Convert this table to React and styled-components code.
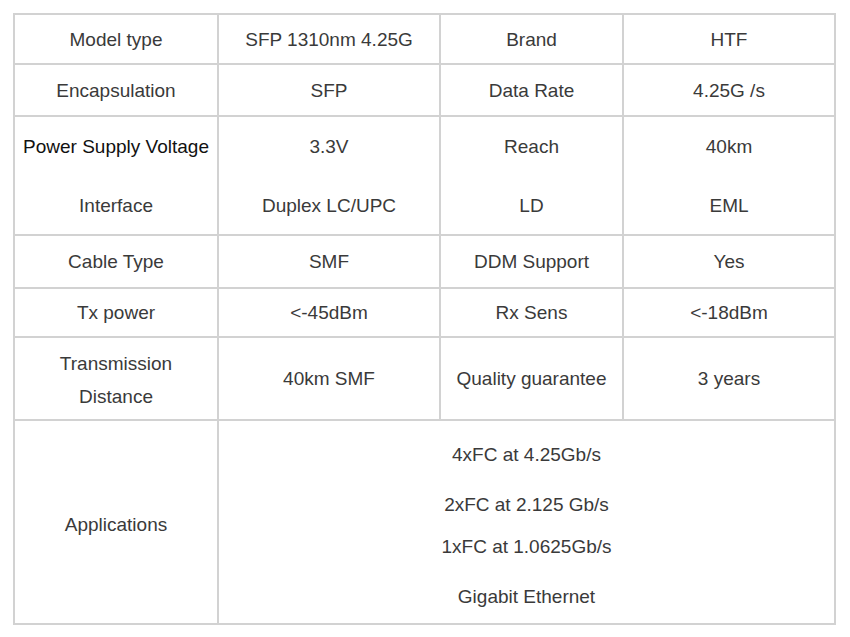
import React from "react";
import styled, { createGlobalStyle } from "styled-components";

const Global = createGlobalStyle`
  html, body { margin: 0; padding: 0; background: #ffffff; }
  body { font-family: "Liberation Sans", Arial, sans-serif; }
`;

const Page = styled.div`
  padding: 13px 0 0 13px;
  width: 850px;
  height: 637px;
  box-sizing: border-box;
`;

const Grid = styled.div`
  display: grid;
  grid-template-columns: 204px 222px 183px 212px;
  grid-template-rows: 50px 52px 60px 59px 53px 49px 83px 204px;
  width: max-content;
  border-top: 2px solid #d2d2d2;
  border-left: 2px solid #d2d2d2;
`;

const Cell = styled.div`
  box-sizing: border-box;
  display: flex;
  flex-direction: column;
  align-items: center;
  justify-content: center;
  text-align: center;
  border-right: 2px solid #d2d2d2;
  border-bottom: ${(p) => (p.$open ? "none" : "2px solid #d2d2d2")};
  font-size: 19px;
  line-height: 33px;
  color: ${(p) => (p.$dark ? "#111111" : "#3a3a3a")};
  grid-column: ${(p) => p.$span || "auto"};
  padding-top: ${(p) => p.$shift || 0}px;
  padding-bottom: ${(p) => (p.$open ? "2px" : "0")};
`;

const AppCell = styled(Cell)`
  justify-content: flex-start;
  padding-top: 22px;
  line-height: 24px;
`;

const AppLine = styled.div`
  margin-top: ${(p) => p.$gap || 0}px;
  white-space: pre;
`;

const rows = [
  ["Model type", "SFP 1310nm 4.25G", "Brand", "HTF"],
  ["Encapsulation", "SFP", "Data Rate", "4.25G /s"],
  ["Power Supply Voltage", "3.3V", "Reach", "40km"],
  ["Interface", "Duplex LC/UPC", "LD", "EML"],
  ["Cable Type", "SMF", "DDM Support", "Yes"],
  ["Tx power", "<-45dBm", "Rx Sens", "<-18dBm"],
];

export default function App() {
  return (
    <>
      <Global />
      <Page>
        <Grid>
          {rows.map((r, i) =>
            r.map((t, j) => (
              <Cell
                key={`${i}-${j}`}
                $open={i === 2}
                $dark={i === 2 && j === 0}
              >
                {t}
              </Cell>
            ))
          )}
          <Cell $shift={2}>
            <div>Transmission</div>
            <div>Distance</div>
          </Cell>
          <Cell>40km SMF</Cell>
          <Cell>Quality guarantee</Cell>
          <Cell>3 years</Cell>
          <Cell $shift={5}>Applications</Cell>
          <AppCell $span="2 / span 3">
            <AppLine>4xFC at 4.25Gb/s</AppLine>
            <AppLine $gap={26}>2xFC at 2.125 Gb/s</AppLine>
            <AppLine $gap={18}>1xFC at 1.0625Gb/s</AppLine>
            <AppLine $gap={26}>Gigabit Ethernet</AppLine>
          </AppCell>
        </Grid>
      </Page>
    </>
  );
}
